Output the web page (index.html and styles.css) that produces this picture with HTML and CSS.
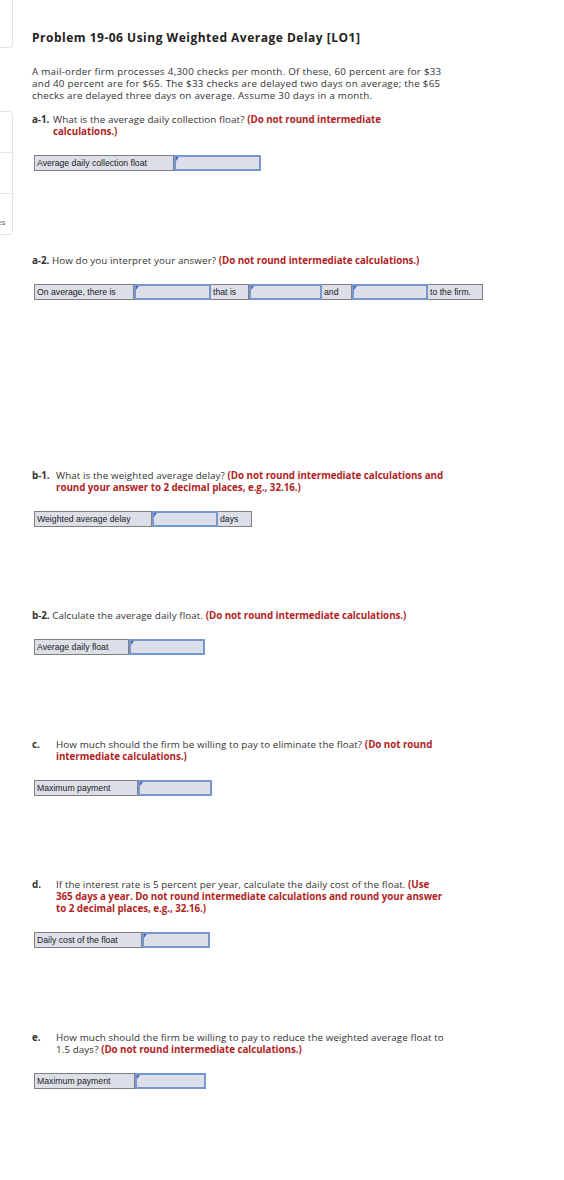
FILE: index.html
```html
<!DOCTYPE html>
<html lang="en">
<head>
<meta charset="utf-8">
<title>Problem 19-06</title>
<link rel="stylesheet" href="styles.css">
</head>
<body>
<aside class="sidebar">
  <div class="side-card side-top"></div>
  <div class="side-card side-list">
    <div class="side-item"></div>
    <div class="side-item"></div>
    <div class="side-item"><span class="side-text">es</span></div>
  </div>
</aside>
<main class="page">
  <h1 class="title">Problem 19-06 Using Weighted Average Delay [LO1]</h1>
  <p class="intro">A mail-order firm processes 4,300 checks per month. Of these, 60 percent are for $33 and 40 percent are for $65. The $33 checks are delayed two days on average; the $65 checks are delayed three days on average. Assume 30 days in a month.</p>

  <section class="part">
    <div class="q q-a1"><span class="q-label">a-1.</span><span class="q-text">What is the average daily collection float? <b class="note">(Do not round intermediate calculations.)</b></span></div>
    <div class="grid-row">
      <div class="cell label" style="width:140px">Average daily collection float</div>
      <div class="cell input" style="width:87px"></div>
    </div>
  </section>

  <section class="part part-wide">
    <div class="q q-inline"><span class="q-label">a-2.</span> How do you interpret your answer? <b class="note">(Do not round intermediate calculations.)</b></div>
    <div class="grid-row">
      <div class="cell label" style="width:100px">On average, there is</div>
      <div class="cell input" style="width:77px"></div>
      <div class="cell label" style="width:38px">that is</div>
      <div class="cell input" style="width:73px"></div>
      <div class="cell label" style="width:30px">and</div>
      <div class="cell input" style="width:76px"></div>
      <div class="cell label" style="width:55px">to the firm.</div>
    </div>
  </section>

  <section class="part">
    <div class="q"><span class="q-label">b-1.</span><span class="q-text">What is the weighted average delay? <b class="note">(Do not round intermediate calculations and round your answer to 2 decimal places, e.g., 32.16.)</b></span></div>
    <div class="grid-row">
      <div class="cell label" style="width:118px">Weighted average delay</div>
      <div class="cell input" style="width:66px"></div>
      <div class="cell label" style="width:34px">days</div>
    </div>
  </section>

  <section class="part">
    <div class="q q-inline"><span class="q-label">b-2.</span> Calculate the average daily float. <b class="note">(Do not round intermediate calculations.)</b></div>
    <div class="grid-row">
      <div class="cell label" style="width:95px">Average daily float</div>
      <div class="cell input" style="width:76px"></div>
    </div>
  </section>

  <section class="part">
    <div class="q"><span class="q-label">c.</span><span class="q-text">How much should the firm be willing to pay to eliminate the float? <b class="note">(Do not round intermediate calculations.)</b></span></div>
    <div class="grid-row">
      <div class="cell label" style="width:104px">Maximum payment</div>
      <div class="cell input" style="width:74px"></div>
    </div>
  </section>

  <section class="part">
    <div class="q"><span class="q-label">d.</span><span class="q-text">If the interest rate is 5 percent per year, calculate the daily cost of the float. <b class="note">(Use 365 days a year. Do not round intermediate calculations and round your answer to 2 decimal places, e.g., 32.16.)</b></span></div>
    <div class="grid-row">
      <div class="cell label" style="width:108px">Daily cost of the float</div>
      <div class="cell input" style="width:68px"></div>
    </div>
  </section>

  <section class="part">
    <div class="q"><span class="q-label">e.</span><span class="q-text">How much should the firm be willing to pay to reduce the weighted average float to 1.5 days? <b class="note">(Do not round intermediate calculations.)</b></span></div>
    <div class="grid-row">
      <div class="cell label" style="width:101px">Maximum payment</div>
      <div class="cell input" style="width:71px"></div>
    </div>
  </section>
</main>
</body>
</html>
```

FILE: styles.css
```css
html, body {
  margin: 0;
  padding: 0;
  background: #ffffff;
}

body {
  font-family: "Open Sans", Lato, sans-serif;
  color: #333333;
  position: relative;
  min-height: 1180px;
}

.sidebar {
  position: absolute;
  left: -20px;
  top: 0;
  width: 33px;
}

.side-card {
  border: 1px solid #e3e3e3;
  border-radius: 0 4px 4px 0;
  background: #ffffff;
}

.side-top {
  height: 47px;
  border-top: none;
  border-radius: 0 0 4px 0;
}

.side-list {
  margin-top: 63px;
}

.side-item {
  height: 40px;
  border-top: 1px solid #e6e6e6;
  position: relative;
}

.side-item:first-child {
  border-top: none;
}

.side-text {
  position: absolute;
  left: 16px;
  top: 24px;
  font-family: "Liberation Sans", Arial, sans-serif;
  font-size: 8px;
  color: #666666;
}

.page {
  padding: 31px 0 40px 32px;
  width: 414px;
}

.title {
  margin: 0;
  font-size: 12px;
  line-height: 14px;
  font-weight: 700;
  letter-spacing: 0.5px;
  color: #222222;
}

.intro {
  margin: 21px 0 0 0;
  font-size: 9.8px;
  line-height: 12px;
  letter-spacing: 0.25px;
}

.part {
  margin-top: 12px;
  margin-bottom: 83.5px;
}

.part-wide {
  margin-bottom: 170px;
}

.part + .part {
  margin-top: 0;
}

.q {
  display: flex;
  font-size: 9.8px;
  line-height: 12px;
  letter-spacing: 0.1px;
}

.q-label {
  font-weight: 700;
  color: #333333;
  letter-spacing: -0.05px;
  flex: 0 0 24px;
}

.q-a1 .q-label {
  flex-basis: 21px;
}

.q-text {
  flex: 1;
}

.q-inline {
  display: block;
}

.note {
  color: #b21f1f;
  font-weight: 700;
  letter-spacing: -0.05px;
}

.grid-row {
  display: flex;
  margin-top: 17px;
  margin-left: 2px;
  height: 16px;
}

.cell {
  box-sizing: border-box;
  flex-shrink: 0;
  height: 16px;
  font-family: "Liberation Sans", Arial, sans-serif;
  font-size: 8.7px;
  line-height: 14px;
  white-space: nowrap;
  overflow: hidden;
  background: #dcdfe8;
}

.label {
  border: 1px solid #7f7f7f;
  padding-left: 2px;
  color: #222222;
}

.label + .label,
.input + .label {
  border-left: none;
}

.input {
  position: relative;
  border: 2px solid #7897cf;
  background: #dcdfe9;
}

.input::before {
  content: "";
  position: absolute;
  left: 0;
  top: 0;
  border-top: 4px solid #3e6fc4;
  border-right: 3px solid transparent;
}
```
